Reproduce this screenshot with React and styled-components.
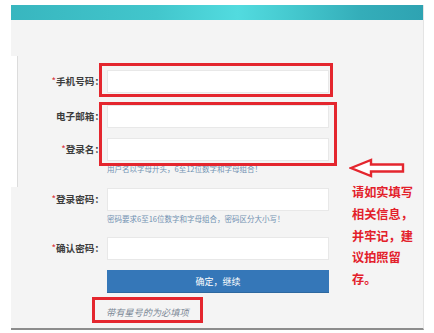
import React from "react";
import styled, { createGlobalStyle } from "styled-components";

const GlobalStyle = createGlobalStyle`
  html, body { margin: 0; padding: 0; background: #fff; }
  body { font-family: "Noto Sans CJK SC", "Noto Sans", sans-serif; }
`;

const Page = styled.div`
  position: relative;
  width: 434px;
  height: 333px;
  padding: 5px 10px 0 11px;
  box-sizing: border-box;
  overflow: hidden;
`;

const Frame = styled.div`
  background: #f4f4f4;
  border-right: 1px solid #e4e4e4;
  border-bottom: 2px solid #8c8c8c;
`;

const Header = styled.div`
  height: 15px;
  background: linear-gradient(90deg, #38b6bf 0%, #42c6cc 35%, #52dbdf 55%, #45c9cf 68%, #34adb9 85%, #2ea3b2 100%);
`;

const Body = styled.div`
  display: flex;
  height: 308px;
`;

const SideStrip = styled.div`
  width: 6px;
  height: 131px;
  margin-top: 36px;
  background: #fff;
  border-right: 1px solid #dcdcdc;
`;

const Form = styled.div`
  display: flex;
  flex-direction: column;
  padding-top: 50px;
`;

const Field = styled.div`
  display: grid;
  grid-template-columns: 86px 222px;
  column-gap: 3px;
  margin-top: ${(p) => p.$gap || 0}px;
`;

const Label = styled.div`
  text-align: right;
  font-size: 9.6px;
  line-height: 23px;
  font-weight: bold;
  color: #3c3c3c;
  white-space: nowrap;
`;

const Star = styled.span`
  color: #d9363e;
  font-weight: normal;
`;

const Input = styled.div`
  height: 23px;
  background: #fff;
  border: 1px solid #e8e8e8;
  box-sizing: border-box;
`;

const Hint = styled.div`
  margin-top: 2px;
  font-size: 7.5px;
  line-height: 12px;
  color: #7191b2;
  white-space: nowrap;
`;

const Submit = styled.div`
  height: 23px;
  background: #3577b8;
  color: #fff;
  font-size: 9px;
  line-height: 23px;
  text-align: center;
  border-bottom: 1px solid #2d689f;
  box-sizing: border-box;
`;

const Footnote = styled.div`
  margin-top: 12px;
  padding-left: 88px;
  font-size: 9.2px;
  line-height: 14px;
  font-style: italic;
  color: #7b8896;
`;

const Mark = styled.div`
  position: absolute;
  left: ${(p) => p.$x}px;
  top: ${(p) => p.$y}px;
  width: ${(p) => p.$w}px;
  height: ${(p) => p.$h}px;
  border: 3px solid #e4262e;
  box-sizing: border-box;
`;

const Arrow = styled.svg`
  position: absolute;
  left: 349px;
  top: 158px;
`;

const Note = styled.div`
  position: absolute;
  left: 352px;
  top: 182px;
  width: 72px;
  font-size: 12.2px;
  line-height: 21.8px;
  font-weight: bold;
  color: #e3202a;
`;

const fields = [
  { label: "手机号码：", star: true, gap: 0 },
  { label: "电子邮箱：", star: false, gap: 12 },
  { label: "登录名：", star: true, gap: 10, hint: "用户名以字母开头，6至12位数字和字母组合！" },
  { label: "登录密码：", star: true, gap: 13, hint: "密码要求6至16位数字和字母组合，密码区分大小写！" },
  { label: "确认密码：", star: true, gap: 12 },
];

export default function App() {
  return (
    <>
      <GlobalStyle />
      <Page>
        <Frame>
          <Header />
          <Body>
            <SideStrip />
            <Form>
              {fields.map((f) => (
                <Field key={f.label} $gap={f.gap}>
                  <Label>
                    {f.star && <Star>*</Star>}
                    {f.label}
                  </Label>
                  <div>
                    <Input />
                    {f.hint && <Hint>{f.hint}</Hint>}
                  </div>
                </Field>
              ))}
              <Field $gap={10}>
                <span />
                <Submit>确定，继续</Submit>
              </Field>
              <Footnote>带有星号的为必填项</Footnote>
            </Form>
          </Body>
        </Frame>

        <Mark $x={99} $y={63} $w={234} $h={34} />
        <Mark $x={99} $y={102} $w={238} $h={64} />
        <Mark $x={92} $y={297} $w={111} $h={26} />

        <Arrow width="57" height="20" viewBox="0 0 57 20">
          <path
            d="M2 10 L22 2 L22 6.5 L54 6.5 L54 13.5 L22 13.5 L22 18 Z"
            fill="#fff"
            stroke="#e4262e"
            strokeWidth="2.4"
            strokeLinejoin="miter"
          />
        </Arrow>

        <Note>
          请如实填写
          <br />
          相关信息，
          <br />
          并牢记，建
          <br />
          议拍照留
          <br />
          存。
        </Note>
      </Page>
    </>
  );
}
